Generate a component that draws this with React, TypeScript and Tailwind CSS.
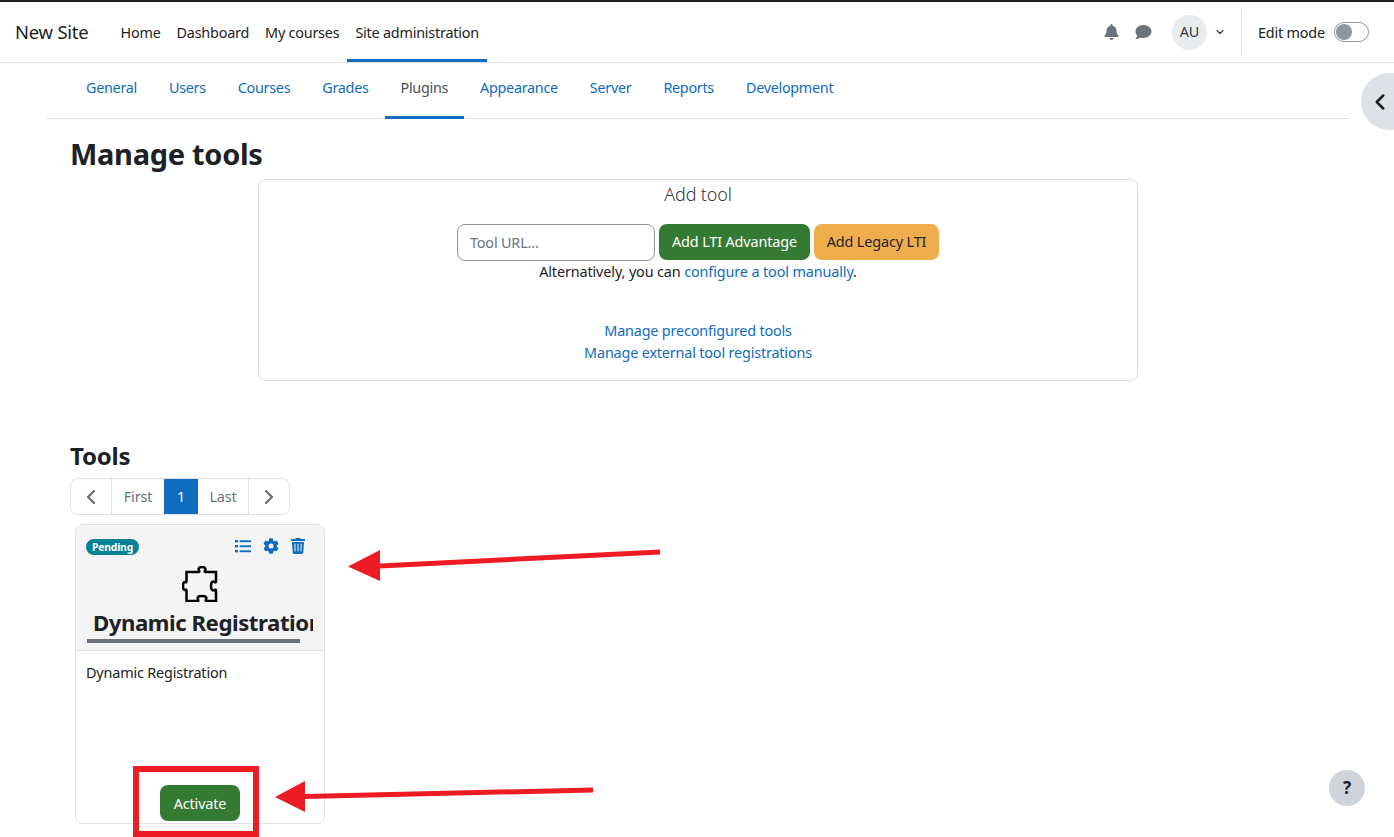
import React from "react";
import { ChevronDown, ChevronLeft, ChevronRight } from "lucide-react";

const navLinks = ["Home", "Dashboard", "My courses", "Site administration"];
const tabs = ["General", "Users", "Courses", "Grades", "Plugins", "Appearance", "Server", "Reports", "Development"];

const Bell = () => (
  <svg viewBox="0 0 448 512" className="h-[16px] w-[15px] fill-[#6a737b]">
    <path d="M224 512c35 0 64-29 64-64H160c0 35 29 64 64 64zm215-150c-19-21-55-52-55-154 0-78-54-140-128-155V32a32 32 0 1 0-64 0v21C118 68 64 130 64 208c0 102-36 133-55 154-6 6-9 14-9 22 0 16 13 32 32 32h384c19 0 32-16 32-32 0-8-3-16-9-22z" />
  </svg>
);

const Comment = () => (
  <svg viewBox="0 0 512 512" className="h-[16px] w-[17px] fill-[#6a737b]">
    <path d="M256 32C115 32 0 125 0 240c0 50 22 95 58 131-13 50-54 95-55 96-2 2-3 6-2 9s4 4 7 4c67 0 117-32 143-52 32 12 67 18 105 18 141 0 256-93 256-206S397 32 256 32z" />
  </svg>
);

const ListIcon = () => (
  <svg viewBox="0 0 16 16" className="h-[16px] w-[16px] fill-[#0f6cbf]">
    <rect x="0" y="2" width="3" height="2.4" />
    <rect x="0" y="7" width="3" height="2.4" />
    <rect x="0" y="12" width="3" height="2.4" />
    <rect x="4.6" y="2.3" width="11.4" height="1.9" />
    <rect x="4.6" y="7.3" width="11.4" height="1.9" />
    <rect x="4.6" y="12.3" width="11.4" height="1.9" />
  </svg>
);

const Gear = () => (
  <svg viewBox="0 0 512 512" className="h-[16px] w-[16px] fill-[#0f6cbf]">
    <path d="M487 316l-42-25a191 191 0 0 0 0-70l42-25c5-3 7-9 5-14-11-35-30-67-54-93-4-4-10-5-15-2l-42 24a188 188 0 0 0-61-35V28c0-6-4-10-9-11a196 196 0 0 0-109 0c-5 1-9 5-9 11v48c-23 8-43 20-61 35L90 87c-5-3-11-2-15 2-24 26-43 58-54 93-2 5 0 11 5 14l42 25a191 191 0 0 0 0 70l-42 25c-5 3-7 9-5 14 11 35 30 67 54 93 4 4 10 5 15 2l42-24c18 15 38 27 61 35v48c0 6 4 10 9 11 37 8 74 8 109 0 5-1 9-5 9-11v-48c23-8 43-20 61-35l42 24c5 3 11 2 15-2 24-26 43-58 54-93 2-5 0-11-5-14zM256 336a80 80 0 1 1 0-160 80 80 0 0 1 0 160z" />
  </svg>
);

const Trash = () => (
  <svg viewBox="0 0 448 512" className="h-[16px] w-[14px] fill-[#0f6cbf]">
    <path d="M432 32H312l-9-19a24 24 0 0 0-22-13H167a24 24 0 0 0-21 13l-9 19H16A16 16 0 0 0 0 48v32a16 16 0 0 0 16 16h416a16 16 0 0 0 16-16V48a16 16 0 0 0-16-16zM53 467a48 48 0 0 0 48 45h246a48 48 0 0 0 48-45l21-339H32zM304 192a16 16 0 0 1 32 0v224a16 16 0 0 1-32 0zm-96 0a16 16 0 0 1 32 0v224a16 16 0 0 1-32 0zm-96 0a16 16 0 0 1 32 0v224a16 16 0 0 1-32 0z" />
  </svg>
);

const PuzzleOutline = () => (
  <svg viewBox="0 0 36 36" className="h-[36px] w-[36px] fill-none stroke-black stroke-[2.5]">
    <path d="M4.500 6H16.500c.8 0 1-.6.6-1.200-.5-.8-.6-1.400-.4-2.200C17.100 1.300 18.400 1 20 1s2.900.3 3.300 1.600c.2.800.1 1.400-.4 2.200-.4.600-.2 1.200.6 1.200H34V15.500c0 .8-.6 1-1.200.6-.8-.5-1.400-.6-2.200-.4C29.300 16.100 29 18.400 29 20s.3 3.900 1.600 4.300c.8.200 1.400.1 2.200-.4.6-.4 1.200-.2 1.200.6V35H24.500c-.8 0-1-.6-.6-1.200.5-.8.6-1.400.4-2.200C23.900 30.300 21.600 30 20 30s-3.900.3-4.300 1.600c-.2.800-.1 1.400.4 2.200.4.600.2 1.200-.6 1.200H4.500V24.500C4.500 23.700 3.900 23.500 3.300 23.900 2.500 24.400 1 23.600 1 20 1 16.400 2.500 15.600 3.300 16.100 3.900 16.500 4.500 16.300 4.500 15.500V6Z" />
  </svg>
);

export default function App() {
  return (
    <div className="relative h-[837px] w-full overflow-hidden bg-white font-['Noto_Sans',sans-serif] text-[14.4px] tracking-[-0.17px] text-[#1d2125]">
      {/* top navbar */}
      <header className="flex h-[63px] items-stretch border-t-2 border-b border-t-[#1d2125] border-b-[#dee2e6] pl-[15px] pr-[25px]">
        <span className="mr-[24px] flex items-center text-[18.4px] tracking-[-0.2px]">New Site</span>
        <nav className="flex items-stretch tracking-[-0.22px]">
          {navLinks.map((l, i) => (
            <a
              key={l}
              className={`flex items-center px-[8px] ${i === 3 ? "border-b-[3px] border-[#0f6cbf] pt-[5px]" : "pt-[2px]"}`}
            >
              {l}
            </a>
          ))}
        </nav>
        <div className="ml-auto flex items-center">
          <Bell />
          <span className="ml-[16px]">
            <Comment />
          </span>
          <span className="ml-[20px] flex h-[35px] w-[35px] items-center justify-center rounded-full bg-[#e9ecef] text-[#343a40]">
            AU
          </span>
          <ChevronDown className="ml-[7px] h-[12px] w-[12px] text-[#343a40]" strokeWidth={2.5} />
          <span className="ml-[15px] h-[45px] w-px bg-[#dee2e6]" />
          <span className="ml-[16px] pt-[2px]">Edit mode</span>
          <span className="ml-[9px] flex h-[20px] w-[35px] items-center rounded-full border border-[#8f959e] pl-[1px]">
            <span className="h-[16px] w-[16px] rounded-full bg-[#8f959e]" />
          </span>
        </div>
      </header>

      {/* secondary nav */}
      <div className="mr-[45px] ml-[47px] flex h-[56px] items-stretch border-b border-[#dee2e6] pl-[23px] tracking-[-0.3px]">
        {tabs.map((t) => (
          <a
            key={t}
            className={`-mb-px flex items-center px-[16px] ${
              t === "Plugins" ? "border-b-[3px] border-[#0f6cbf] pb-[3px] text-[#495057]" : "pb-[6px] text-[#0f6cbf]"
            }`}
          >
            {t}
          </a>
        ))}
      </div>

      <main className="ml-[71px] w-[1254px]">
        <h1 className="mt-[13px] -ml-px h-[47px] text-[29px] leading-[44px] font-bold tracking-[-0.3px]">Manage tools</h1>

        {/* add tool box */}
        <section className="mx-auto h-[202px] w-[880px] rounded-[8px] border border-[#dadce0] text-center">
          <h2 className="mt-[1px] text-[18px] leading-[26px] font-light text-[#343a40]">Add tool</h2>
          <div className="mt-[17px] flex justify-center gap-[4px]">
            <div className="flex h-[37px] w-[198px] items-center rounded-[8px] border border-[#8f959e] pl-[12px] text-left text-[#6a737b]">
              Tool URL...
            </div>
            <button className="h-[36px] w-[151px] rounded-[8px] bg-[#357a32] tracking-[-0.12px] text-white">
              Add LTI Advantage
            </button>
            <button className="h-[36px] w-[125px] rounded-[8px] bg-[#f0ad4e] tracking-[-0.12px] text-[#1d2125]">
              Add Legacy LTI
            </button>
          </div>
          <p className="leading-[22px] tracking-[-0.12px]">
            Alternatively, you can <a className="text-[#0f6cbf]">configure a tool manually</a>.
          </p>
          <div className="mt-[37px] leading-[22px] text-[#0f6cbf]">
            <p>Manage preconfigured tools</p>
            <p>Manage external tool registrations</p>
          </div>
        </section>

        <h3 className="mt-[58px] -ml-px h-[39px] text-[24px] leading-[34px] font-bold tracking-[-0.2px]">Tools</h3>

        {/* pagination */}
        <div className="-ml-px flex h-[37px] w-[220px] overflow-hidden rounded-[8px] border border-[#dee2e6] text-[#6a737b]">
          <span className="flex w-[41px] items-center justify-center border-r border-[#dee2e6]">
            <ChevronLeft className="h-[24px] w-[24px] text-[#6a737b]" strokeWidth={2.4} />
          </span>
          <span className="flex w-[52px] items-center justify-center">First</span>
          <span className="flex w-[34px] items-center justify-center bg-[#0f6cbf] text-white">1</span>
          <span className="flex w-[51px] items-center justify-center border-r border-[#dee2e6]">Last</span>
          <span className="flex flex-1 items-center justify-center">
            <ChevronRight className="h-[24px] w-[24px] text-[#6a737b]" strokeWidth={2.4} />
          </span>
        </div>

        {/* tool card */}
        <div className="mt-[9px] ml-[4px] flex h-[300px] w-[250px] flex-col rounded-[8px] border border-[#dee2e6]">
          <div className="h-[126px] overflow-hidden rounded-t-[8px] border-b border-[#dee2e6] bg-[#f4f4f4] pl-[10px]">
            <div className="flex h-[40px] items-center pr-[19px] pt-[2px]">
              <span className="mt-[2px] rounded-full bg-[#008196] px-[6px] text-[10.4px] leading-[16px] font-bold tracking-[-0.2px] text-white">
                Pending
              </span>
              <span className="ml-auto flex items-center gap-[12px]">
                <ListIcon />
                <Gear />
                <Trash />
              </span>
            </div>
            <div className="flex justify-center">
              <span className="mt-[1px] mr-[11px]">
                <PuzzleOutline />
              </span>
            </div>
            <div className="mt-[5px] w-[227px] overflow-hidden pl-[7px]">
              <div className="text-[22.2px] leading-[32px] font-bold tracking-[-0.45px] whitespace-nowrap">Dynamic Registration</div>
            </div>
            <div className="ml-[1px] h-[4px] w-[213px] bg-[#6a737b]" />
          </div>
          <p className="mt-[11px] pl-[10px] leading-[22px]">Dynamic Registration</p>
          <button className="mt-[101px] ml-[84px] h-[36px] w-[80px] rounded-[8px] bg-[#357a32] pt-[1px] text-white">
            Activate
          </button>
        </div>
      </main>

      {/* drawer toggle */}
      <div className="absolute top-[73px] left-[1361px] flex h-[57px] w-[57px] items-center rounded-full bg-[#dee2e6] pl-[6px]">
        <ChevronLeft className="h-[26px] w-[26px] text-[#1d2125]" strokeWidth={2.3} />
      </div>

      {/* help button */}
      <div className="absolute top-[770px] left-[1329px] flex h-[36px] w-[36px] items-center justify-center rounded-full bg-[#ced4da] text-[17px] font-bold text-[#1d2125]">
        ?
      </div>

      {/* annotations */}
      <div className="absolute top-[766px] left-[133px] h-[71px] w-[126px] border-[6px] border-[#ed1c24]" />
      <svg className="pointer-events-none absolute top-0 left-0" width="1394" height="837">
        <polygon points="660,549.500 660,554.500 380,568.500 380,581 348,566.500 380,550 380,563.500" fill="#ed1c24" />
        <polygon points="593,787.500 593,792.500 305,799 305,812 275,797 305,781 305,794" fill="#ed1c24" />
      </svg>
    </div>
  );
}
